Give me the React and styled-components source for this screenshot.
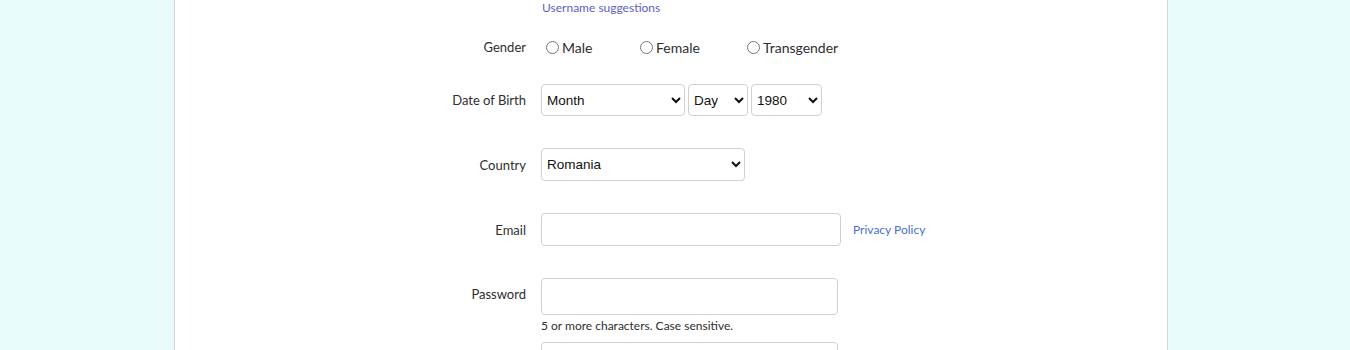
import styled, { createGlobalStyle } from "styled-components";
import React from "react";

const GlobalStyle = createGlobalStyle`
  html, body {
    margin: 0;
    padding: 0;
    background: #e8fbfb;
  }
  body {
    font-family: Lato, "Noto Sans", sans-serif;
    color: #333;
  }
`;

const months = ["Month", "January", "February", "March", "April", "May", "June", "July", "August", "September", "October", "November", "December"];
const days = ["Day", ...Array.from({ length: 31 }, (_, i) => String(i + 1))];
const years = Array.from({ length: 60 }, (_, i) => String(2010 - i));

const App = () => {
  return (
    <Page>
      <GlobalStyle />
      <Panel>
        <Row $mb={22}>
          <Label />
          <Suggest href="#">Username suggestions</Suggest>
        </Row>
        <Row $mb={27}>
          <Label>Gender</Label>
          <RadioGroup>
            <RadioLabel $w={94}>
              <Radio type="radio" name="gender" />
              Male
            </RadioLabel>
            <RadioLabel $w={107}>
              <Radio type="radio" name="gender" />
              Female
            </RadioLabel>
            <RadioLabel>
              <Radio type="radio" name="gender" />
              Transgender
            </RadioLabel>
          </RadioGroup>
        </Row>
        <Row $mb={32}>
          <Label>Date of Birth</Label>
          <Controls>
            <Select $w={144} defaultValue="Month">
              {months.map((m) => (
                <option key={m}>{m}</option>
              ))}
            </Select>
            <Select $w={60} defaultValue="Day">
              {days.map((d) => (
                <option key={d}>{d}</option>
              ))}
            </Select>
            <Select $w={71} defaultValue="1980">
              {years.map((y) => (
                <option key={y}>{y}</option>
              ))}
            </Select>
          </Controls>
        </Row>
        <Row $mb={32}>
          <Label>Country</Label>
          <Select $w={204} $h={33} defaultValue="Romania">
            <option>Moldova</option>
            <option>Romania</option>
            <option>Hungary</option>
          </Select>
        </Row>
        <Row $mb={32}>
          <Label>Email</Label>
          <Controls $gap={12}>
            <Input type="email" $w={300} $h={33} />
            <Link href="#">Privacy Policy</Link>
          </Controls>
        </Row>
        <Row $mb={4}>
          <Label $shift={-3}>Password</Label>
          <Input type="password" $w={297} $h={37} />
        </Row>
        <Row $mb={9}>
          <Label />
          <Hint>5 or more characters. Case sensitive.</Hint>
        </Row>
        <Row>
          <Label />
          <Input type="password" $w={297} $h={37} />
        </Row>
      </Panel>
    </Page>
  );
};

export default App;

const Page = styled.div`
  height: 350px;
  overflow: hidden;
  padding-left: 174px;
`;

const Panel = styled.div`
  width: 992px;
  min-height: 400px;
  background: #fff;
  border-left: 1px solid #d2d6d6;
  border-right: 1px solid #d2d6d6;
  padding-top: 1px;
`;

const Row = styled.div`
  display: grid;
  grid-template-columns: 351px 1fr;
  column-gap: 15px;
  align-items: center;
  margin-bottom: ${(p) => p.$mb || 0}px;
`;

const Label = styled.div`
  text-align: right;
  font-size: 13px;
  color: #2e2e2e;
  transform: translateY(${(p) => p.$shift || 0}px);
`;

const Suggest = styled.a`
  font-size: 12px;
  line-height: 14px;
  color: #5b5fc7;
  text-decoration: none;
  padding-left: 1px;
`;

const RadioGroup = styled.div`
  display: flex;
  align-items: center;
  height: 20px;
  padding-left: 5px;
`;

const RadioLabel = styled.label`
  display: flex;
  align-items: center;
  width: ${(p) => (p.$w ? `${p.$w}px` : "auto")};
  font-size: 14px;
  color: #2e2e2e;
`;

const Radio = styled.input`
  width: 13px;
  height: 13px;
  margin: 0 3px 0 0;
`;

const Controls = styled.div`
  display: flex;
  align-items: center;
  gap: ${(p) => (p.$gap != null ? p.$gap : 3)}px;
`;

const Select = styled.select`
  width: ${(p) => p.$w}px;
  height: ${(p) => p.$h || 32}px;
  box-sizing: border-box;
  border: 1px solid #d0d0d0;
  border-radius: 4px;
  background: #fff;
  font-family: "Liberation Sans", Arial, sans-serif;
  font-size: 13.5px;
  color: #111;
  padding: 0 1px;
`;

const Input = styled.input`
  width: ${(p) => p.$w}px;
  height: ${(p) => p.$h}px;
  box-sizing: border-box;
  border: 1px solid #cfcfcf;
  border-radius: 4px;
  background: #fff;
  padding: 0 8px;
  font-size: 14px;
`;

const Link = styled.a`
  font-size: 12px;
  color: #4a6fd3;
  text-decoration: none;
`;

const Hint = styled.div`
  font-size: 12px;
  line-height: 14px;
  color: #2e2e2e;
`;
